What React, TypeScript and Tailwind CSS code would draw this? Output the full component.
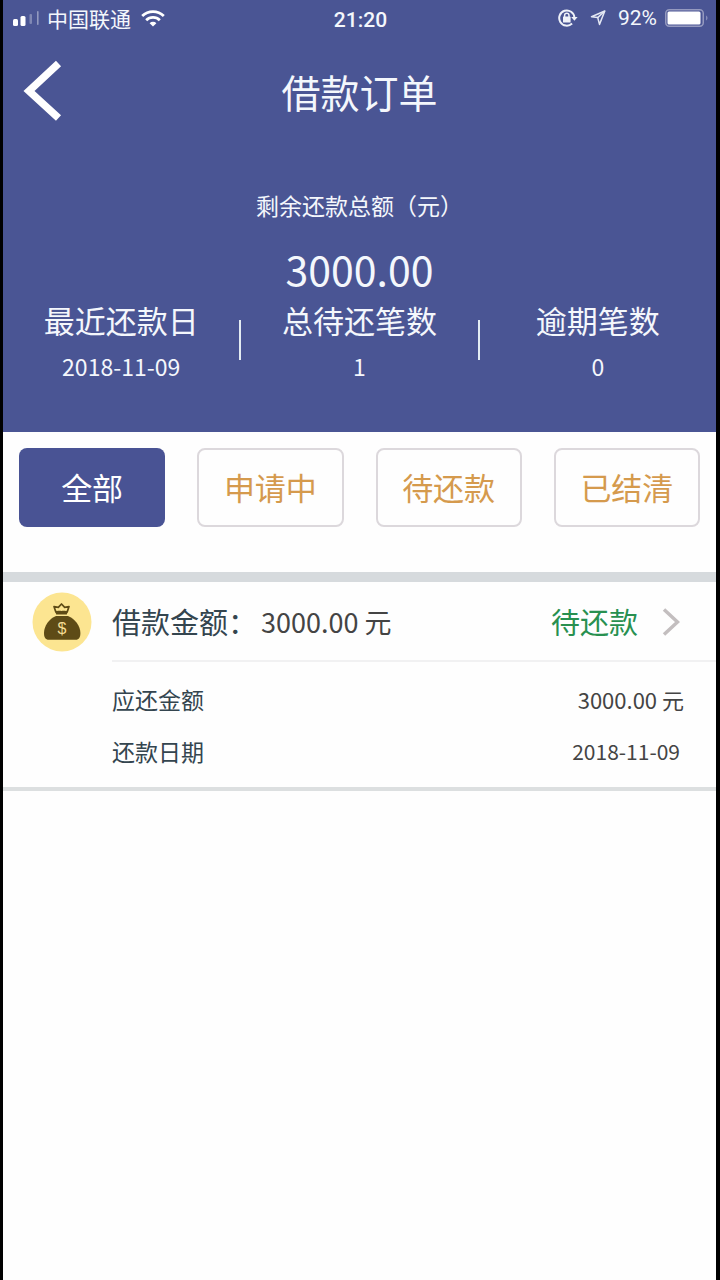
const stats = [
  { label: "最近还款日", value: "2018-11-09" },
  { label: "总待还笔数", value: "1" },
  { label: "逾期笔数", value: "0" },
];

const tabs = ["全部", "申请中", "待还款", "已结清"];

function SignalIcon() {
  return (
    <svg width="26" height="16" viewBox="0 0 26 16" fill="#fff" aria-hidden="true">
      <rect x="0" y="9" width="5" height="7" rx="1.5" />
      <rect x="7.5" y="6" width="5" height="10" rx="1.5" />
      <rect x="16.5" y="4" width="2.5" height="10" rx="1" opacity="0.3" />
      <rect x="24" y="1" width="1.6" height="14" rx="0.8" opacity="0.4" />
    </svg>
  );
}

function WifiIcon() {
  return (
    <svg width="24" height="17" viewBox="0 0 24 17" fill="none" stroke="#fff" strokeWidth="2.8" aria-hidden="true">
      <path d="M1.2 6a15.6 15.6 0 0 1 21.6 0" />
      <path d="M5.2 10.2a9.7 9.7 0 0 1 13.6 0" />
      <path d="M12 16.6l-3.4-3.4a4.8 4.8 0 0 1 6.8 0z" fill="#fff" stroke="none" />
    </svg>
  );
}

function RotationLockIcon() {
  return (
    <svg width="20" height="18" viewBox="0 0 20 18" fill="none" stroke="#eef1f8" aria-hidden="true">
      <path d="M16.4 8.5a7.6 7.6 0 1 0-2.3 6" strokeWidth="2" />
      <path d="M13.2 8h6.4l-3.2 3.8z" fill="#eef1f8" stroke="none" />
      <path d="M6.6 8V6.4a2.2 2.2 0 0 1 4.4 0V8" strokeWidth="1.5" />
      <rect x="5" y="7.5" width="7.6" height="6" rx="0.6" fill="#eef1f8" stroke="none" />
    </svg>
  );
}

function LocationIcon() {
  return (
    <svg width="16" height="16" viewBox="0 0 16 16" fill="none" stroke="#e3e7f3" strokeWidth="1.5" strokeLinejoin="round" aria-hidden="true">
      <path d="M14.8 1L1.5 6.8l6.2.8 1.8 6.8z" />
      <path d="M14.8 1L7.7 7.6" />
    </svg>
  );
}

function BatteryIcon() {
  return (
    <svg width="43" height="18" viewBox="0 0 43 18" aria-hidden="true">
      <rect x="0.75" y="0.75" width="37.5" height="16.5" rx="3.5" fill="none" stroke="#959abf" strokeWidth="1.5" />
      <rect x="2.5" y="2.5" width="33" height="13" rx="1.5" fill="#fff" />
      <path d="M41 6.5c2 .8 2 4.2 0 5z" fill="#858cb9" />
    </svg>
  );
}

function MoneyBagIcon() {
  return (
    <svg width="60" height="60" viewBox="0 0 60 60" aria-hidden="true">
      <circle cx="30" cy="30" r="29.5" fill="#fce591" />
      <path
        d="M24 20.5l-2-6 4.3.8L29.5 12l3.2 3.3 4.3-.8-2 6"
        fill="none"
        stroke="#5e4b16"
        strokeWidth="1.7"
        strokeLinejoin="round"
      />
      <path d="M22.8 18.2c2.2 1.6 3.8-.2 6.7.8 2.9-1 4.500.8 6.7-.8l-1.4 4.3H24.2z" fill="#5e4b16" />
      <path
        d="M24 24h12c6.8 2.6 12.4 10 12.4 17 0 4.400-1.400 6.8-4.800 6.8H16.8c-3.400 0-4.800-2.400-4.800-6.8C12 34 17.2 26.6 24 24z"
        fill="#5e4b16"
      />
      <text x="30" y="42" textAnchor="middle" fontSize="16" fill="#f5dd95" fontFamily="Liberation Sans, sans-serif">
        $
      </text>
    </svg>
  );
}

function StatusBar() {
  return (
    <div className="grid h-9 grid-cols-3 items-center pl-2.5 pr-2">
      <div className="flex items-center">
        <SignalIcon />
        <span className="ml-2 mr-2.5 text-[21px] leading-5">中国联通</span>
        <WifiIcon />
      </div>
      <time className="pt-1 text-center font-['Roboto',sans-serif] text-[21px] leading-6 font-medium">21:20</time>
      <div className="flex items-center justify-end">
        <RotationLockIcon />
        <span className="mx-3">
          <LocationIcon />
        </span>
        <span className="mr-2 font-['Roboto',sans-serif] text-[21px] leading-6">92%</span>
        <BatteryIcon />
      </div>
    </div>
  );
}

function Header() {
  return (
    <header className="bg-[#4a5594] pb-[50px] text-[#f4f7fc]">
      <StatusBar />
      <div className="grid h-[110px] grid-cols-[60px_1fr_60px] items-center">
        <button type="button" aria-label="返回" className="pl-5">
          <svg width="40" height="62" viewBox="0 0 40 62" fill="none" stroke="#fff" strokeWidth="7.5" aria-hidden="true">
            <path d="M35.5 3.500L6 31l29.5 27" />
          </svg>
        </button>
        <h1 className="text-center text-[39px] leading-12">借款订单</h1>
      </div>
      <section className="pt-[41px] text-center">
        <h2 className="text-[23px] leading-9">剩余还款总额（元）</h2>
        <p className="mt-[21px] text-[41px] leading-12">3000.00</p>
      </section>
      <dl className="mt-2 flex items-center text-center">
        {stats.map((stat, i) => (
          <div key={stat.label} className="contents">
            {i > 0 && <span className="mb-0.5 h-10 w-0.5 bg-[#e3ecf2]" />}
            <div className="flex-1">
              <dt className="text-[31px] leading-10">{stat.label}</dt>
              <dd className="mt-2.5 text-[23px] leading-8">{stat.value}</dd>
            </div>
          </div>
        ))}
      </dl>
    </header>
  );
}

function Tabs() {
  return (
    <nav className="grid grid-cols-4 gap-8 px-4 pt-4 pb-[45px]">
      {tabs.map((tab, i) => (
        <button
          key={tab}
          type="button"
          className={
            i === 0
              ? "h-[79px] rounded-lg bg-[#495394] text-[31px] text-white"
              : "h-[79px] rounded-lg border-2 border-[#dcd8dc] text-[31px] text-[#d59a4d]"
          }
        >
          {tab}
        </button>
      ))}
    </nav>
  );
}

function OrderCard() {
  return (
    <article className="border-t-10 border-b-4 border-t-[#d6dadd] border-b-[#dcdfe0] text-[#444]">
      <a href="#order" className="flex items-center pl-[29px]">
        <MoneyBagIcon />
        <div className="ml-5 flex h-20 flex-1 items-center border-b-2 border-[#f1f1f2] pt-0.5 pr-9">
          <span className="text-[29px] text-[#34454f]">借款金额：</span>
          <span className="ml-1 text-[27px]">3000.00 元</span>
          <span className="ml-auto text-[29px] text-[#289050]">待还款</span>
          <svg className="ml-6" width="18" height="28" viewBox="0 0 18 28" fill="none" stroke="#c3bebf" strokeWidth="3.5" aria-hidden="true">
            <path d="M2 1.5L15.5 14 2 26.5" />
          </svg>
        </div>
      </a>
      <dl className="flex flex-col gap-5 pt-[21px] pr-8 pb-5 pl-[109px] leading-8">
        <div className="flex justify-between">
          <dt className="text-[23px] text-[#34454f]">应还金额</dt>
          <dd className="text-[22px]">3000.00 元</dd>
        </div>
        <div className="flex justify-between">
          <dt className="text-[23px] text-[#34454f]">还款日期</dt>
          <dd className="pr-1 text-[21px]">2018-11-09</dd>
        </div>
      </dl>
    </article>
  );
}

export default function App() {
  return (
    <div className="min-h-screen bg-black pr-1 pl-[3px] font-['Noto_Sans_CJK_SC',sans-serif]">
      <main className="min-h-screen bg-[#fefefe]">
        <Header />
        <Tabs />
        <OrderCard />
      </main>
    </div>
  );
}
